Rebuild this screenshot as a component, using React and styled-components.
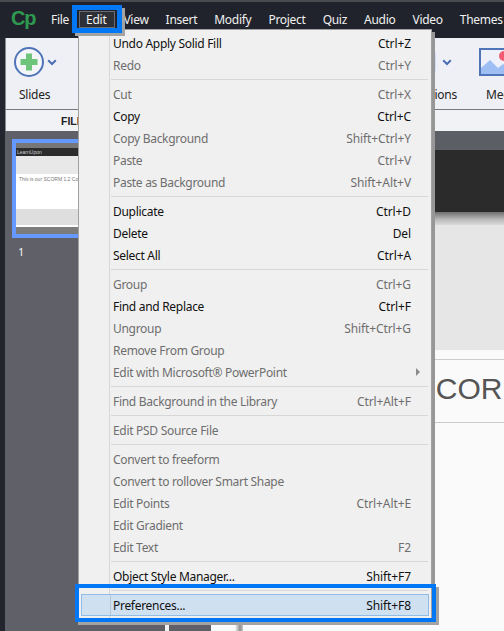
import React from "react";
import styled, { createGlobalStyle } from "styled-components";

const Global = createGlobalStyle`
  html, body { margin: 0; padding: 0; background: #5f6068; }
  #root { width: 504px; height: 631px; }
`;
const UI = `"Noto Sans", "Open Sans", sans-serif`;

const Window = styled.div`
  position: relative; width: 504px; height: 631px; overflow: hidden;
  display: flex; flex-direction: column;
  font-family: ${UI}; font-size: 12px; background: #23262e;
`;
const MenuBar = styled.header`
  height: 36px; flex: none; display: flex; align-items: center;
  background: #20232b; border-top: 2px solid #4a4b50; padding-left: 11px; box-sizing: content-box;
`;
const Logo = styled.span`
  flex: none; font: bold 20px/1 "Liberation Sans", sans-serif; color: #2f9a4f; width: 31.5px; letter-spacing: -1.2px; margin-top: -5px;
`;
const MenuTitle = styled.span`
  flex: none; color: #f1f1f1; line-height: 17px; padding: 0 8.5px; margin-top: -2px;
  white-space: nowrap; box-sizing: border-box; letter-spacing: -0.28px;
  ${p => p.$active && `background: #2e3037; box-shadow: inset 0 0 0 1px #6b6d72; margin-left: 1.5px; padding-left: 7px;`}
`;
const Body = styled.div`
  flex: 1; display: flex; flex-direction: column; margin-left: 5px; min-height: 0;
`;
const Ribbon = styled.section`
  height: 71px; flex: none; display: flex; justify-content: space-between;
  background: #eff0f5; border-left: 1px solid #8a8b90; border-bottom: 1px solid #77787c; color: #222;
`;
const RibbonTool = styled.div`
  flex: none; width: ${p => p.$width}px; margin-left: ${p => p.$left || 0}px;
  display: flex; flex-direction: column; align-items: flex-start;
`;
const ToolIcons = styled.div`
  height: 28px; margin-top: 10px; margin-left: ${p => p.$indent || 0}px;
  display: flex; align-items: center; gap: ${p => p.$gap || 3}px;
`;
const ToolLabel = styled.span`
  margin-top: 11px; margin-left: ${p => p.$indent || 0}px; align-self: ${p => p.$end ? "flex-end" : "flex-start"};
  line-height: 16px; letter-spacing: -0.25px; white-space: nowrap;
`;
const RightTools = styled.div`
  display: flex; margin-right: -23px;
`;
const PanelTabs = styled.div`
  height: 21px; flex: none; display: flex; align-items: center; background: #f1f2f6;
  border-left: 1px solid #8a8b90; padding-left: 55px;
  font: 700 10.5px "Liberation Sans", sans-serif; color: #222;
`;
const Workspace = styled.div`
  flex: 1; min-height: 0; display: flex; background: #fafafa;
`;
const Filmstrip = styled.aside`
  width: 160px; flex: none; background: #5f6068; padding: 8px 0 0 7px; box-sizing: border-box;
`;
const Thumb = styled.div`
  width: 140px; height: 91px; border: 4px solid #6699ff; box-sizing: content-box;
  display: flex; flex-direction: column; background: #fff;
`;
const ThumbBand = styled.div`
  height: ${p => p.$h}px; flex: none; background: ${p => p.$bg}; color: #ccc;
  font: 5px/8px "Liberation Sans", sans-serif; padding-left: 1px; white-space: nowrap;
`;
const ThumbText = styled.div`
  flex: 1; background: #fff; color: #777; font: 5px/8px "Liberation Sans", sans-serif; padding: 1px 0 0 3px; white-space: nowrap;
`;
const SlideNumber = styled.div`
  color: #f2f2f2; font-size: 11px; line-height: 14px; margin: 7px 0 0 6px;
`;
const Splitter = styled.div`width: 4px; flex: none; background: #f2f2f2;`;
const Pasteboard = styled.div`width: 42px; flex: none; background: #5f6068;`;
const Gutter = styled.div`
  width: 32px; flex: none;
  background: linear-gradient(90deg, #fafafa 0, #fafafa 24px, #8d8d8d 29px, #c9c9c9 32px);
`;
const Stage = styled.main`
  flex: 1; min-width: 0; display: flex; flex-direction: column; overflow: hidden;
`;
const StageBand = styled.div`
  height: ${p => p.$h}px; flex: none; background: ${p => p.$bg};
`;
const StageHeading = styled.div`
  height: 64px; flex: none; border-top: 1px solid #ccc; border-bottom: 1px solid #ccc;
  font: 30px/36px "Liberation Sans", sans-serif; color: #555; white-space: nowrap; padding: 11px 0 0 26px; box-sizing: border-box;
`;
const Menu = styled.nav`
  position: absolute; left: 78px; top: 29px; width: 354px; height: 590px; box-sizing: border-box;
  background: linear-gradient(90deg, #f0f0f0 30px, #d7d7d7 30px, #d7d7d7 31px, #f0f0f0 31px);
  border: 1px solid #a0a0a0; padding: 2px;
  box-shadow: 3px 3px 0 #979797; color: #111;
`;
const Row = styled.div`
  height: 22px; display: flex; align-items: center; box-sizing: border-box; position: relative;
  padding: 0 18px 0 32px; white-space: nowrap; letter-spacing: -0.3px;
  color: ${p => p.$off ? "#6e6e6e" : "#111"};
  ${p => p.$hover && `background: linear-gradient(90deg, #cfe0f1 29px, #b4c8dc 29px, #b4c8dc 30px, #cfe0f1 30px); box-shadow: inset 0 0 0 1px #90bce6;`}
`;
const Shortcut = styled.span`margin-left: auto; letter-spacing: -0.1px;`;
const Sub = styled.i`
  position: absolute; right: 9px; top: 7px; width: 0; height: 0;
  border-left: 4px solid #8a8a8a; border-top: 4px solid transparent; border-bottom: 4px solid transparent;
`;
const Sep = styled.div`
  height: 7px; margin-left: 30px; margin-right: 1px; display: flex; align-items: center;
  &::after { content: ""; flex: 1; height: 1px; background: #d7d7d7; }
`;
const Callout = styled.div`
  position: absolute; box-sizing: border-box; border: ${p => p.$b}px solid #0078f5;
  left: ${p => p.$x}px; top: ${p => p.$y}px; width: ${p => p.$w}px; height: ${p => p.$h}px;
  box-shadow: 3px 3px 0 #a3a3a3; pointer-events: none;
`;

const Chevron = () => (
  <svg width="10" height="7" viewBox="0 0 10 7" fill="none"><path d="M1.2 1.3 5 5l3.8-3.7" stroke="#4a6fb5" strokeWidth="2" /></svg>
);
const PlusIcon = () => (
  <svg width="30" height="30" viewBox="0 0 30 30">
    <circle cx="15" cy="15" r="14" fill="#f4f5f8" stroke="#4f74b8" strokeWidth="2" />
    <path d="M12 6.5h6V12h5.5v6H18v5.5h-6V18H6.5v-6H12z" fill="#6cc57a" />
  </svg>
);
const InteractionIcon = () => (
  <svg width="26" height="20" viewBox="0 0 26 20"><rect width="26" height="20" rx="2" fill="#d2ddf6" /></svg>
);
const MediaIcon = () => (
  <svg width="40" height="28" viewBox="0 0 40 28">
    <rect x="1" y="1" width="38" height="26" fill="#eef1f9" stroke="#4f74b8" strokeWidth="2" />
    <path d="M2 26V20l9-8 8 8 5-4 14 10z" fill="#9dbff4" />
    <circle cx="25" cy="8" r="5" fill="#f25b70" />
  </svg>
);

const titles = ["File", "Edit", "View", "Insert", "Modify", "Project", "Quiz", "Audio", "Video", "Themes"];

const items = [
  ["Undo Apply Solid Fill", "Ctrl+Z"], ["Redo", "Ctrl+Y", 1], "-",
  ["Cut", "Ctrl+X", 1], ["Copy", "Ctrl+C"], ["Copy Background", "Shift+Ctrl+Y", 1], ["Paste", "Ctrl+V", 1], ["Paste as Background", "Shift+Alt+V", 1], "-",
  ["Duplicate", "Ctrl+D"], ["Delete", "Del"], ["Select All", "Ctrl+A"], "-",
  ["Group", "Ctrl+G", 1], ["Find and Replace", "Ctrl+F"], ["Ungroup", "Shift+Ctrl+G", 1], ["Remove From Group", "", 1], ["Edit with Microsoft® PowerPoint", "", 1, "sub"], "-",
  ["Find Background in the Library", "Ctrl+Alt+F", 1], "-",
  ["Edit PSD Source File", "", 1], "-",
  ["Convert to freeform", "", 1], ["Convert to rollover Smart Shape", "", 1], ["Edit Points", "Ctrl+Alt+E", 1], ["Edit Gradient", "", 1], ["Edit Text", "F2", 1], "-",
  ["Object Style Manager...", "Shift+F7"], "-",
  ["Preferences...", "Shift+F8", 0, "hover"],
];

export default function App() {
  return (
    <>
      <Global />
      <Window>
        <MenuBar>
          <Logo>Cp</Logo>
          {titles.map(t => <MenuTitle key={t} $active={t === "Edit"}>{t}</MenuTitle>)}
        </MenuBar>
        <Body>
          <Ribbon>
            <RibbonTool $width={60} $left={8}>
              <ToolIcons><PlusIcon /><Chevron /></ToolIcons>
              <ToolLabel $indent={5}>Slides</ToolLabel>
            </RibbonTool>
            <RightTools>
              <RibbonTool $width={66}>
                <ToolIcons $indent={19} $gap={6}><InteractionIcon /><Chevron /></ToolIcons>
                <ToolLabel $end>Interactions</ToolLabel>
              </RibbonTool>
              <RibbonTool $width={48} $left={22}>
                <ToolIcons><MediaIcon /></ToolIcons>
                <ToolLabel $indent={7}>Media</ToolLabel>
              </RibbonTool>
            </RightTools>
          </Ribbon>
          <PanelTabs>FILMSTRIP</PanelTabs>
          <Workspace>
            <Filmstrip>
              <Thumb>
                <ThumbBand $h={5} $bg="#777" />
                <ThumbBand $h={8} $bg="#2c2c2c">LearnUpon</ThumbBand>
                <ThumbBand $h={18} $bg="#e8e8e8" />
                <ThumbText>This is our SCORM 1.2 Course</ThumbText>
                <ThumbBand $h={16} $bg="#dedede" />
                <ThumbBand $h={2} $bg="#fff" />
                <ThumbBand $h={7} $bg="#7c7c7c" />
              </Thumb>
              <SlideNumber>1</SlideNumber>
            </Filmstrip>
            <Splitter />
            <Pasteboard />
            <Gutter />
            <Stage>
              <StageBand $h={19} $bg="#5c5e66" />
              <StageBand $h={62} $bg="#2b2b2b" />
              <StageBand $h={13} $bg="linear-gradient(180deg,#6f6f6f,#bdbdbd 60%,#d9d9d9)" />
              <StageBand $h={125} $bg="#e6e6e6" />
              <StageBand $h={9} $bg="#fafafa" />
              <StageHeading>This is our SCORM 1.2 Course</StageHeading>
            </Stage>
          </Workspace>
        </Body>
        <Menu>
          {items.map((it, i) => it === "-" ? <Sep key={i} /> : (
            <Row key={i} $off={it[2]} $hover={it[3] === "hover"}>
              {it[0]}
              {it[1] && <Shortcut>{it[1]}</Shortcut>}
              {it[3] === "sub" && <Sub />}
            </Row>
          ))}
        </Menu>
        <Callout $x={72} $y={5} $w={50} $h={28} $b={5} />
        <Callout $x={75} $y={584} $w={361} $h={38} $b={4} />
      </Window>
    </>
  );
}
